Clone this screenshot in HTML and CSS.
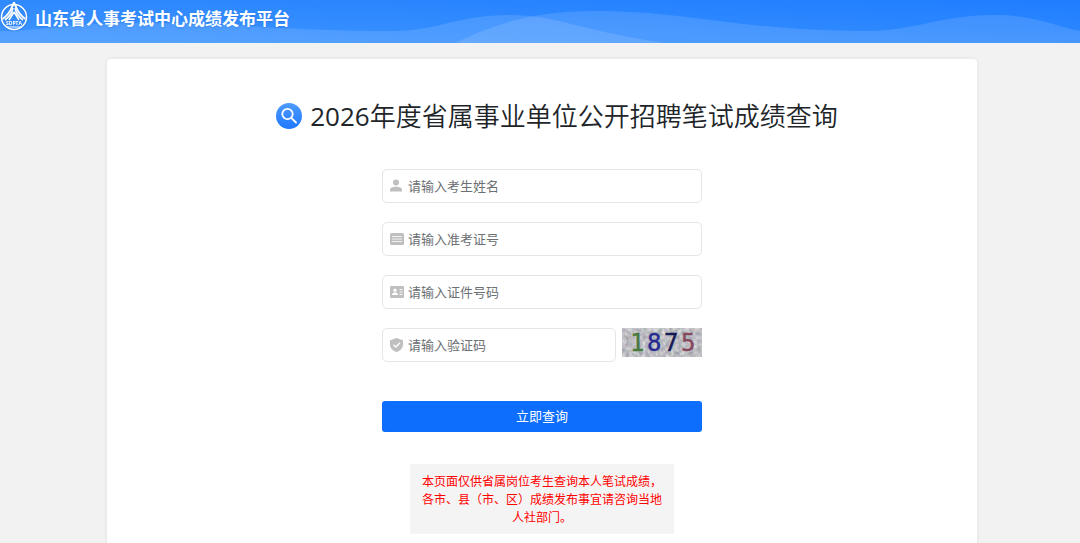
FILE: index.html
```html
<!DOCTYPE html>
<html lang="zh-CN">
  <head>
    <meta charset="UTF-8" />
    <meta name="viewport" content="width=device-width, initial-scale=1" />
    <title>山东省人事考试中心成绩发布平台</title>
    <link rel="stylesheet" href="styles.css">
  </head>
  <body>
    <header class="header">
      <svg class="header-waves" viewBox="0 0 1080 43" preserveAspectRatio="none" aria-hidden="true">
        <path d="M0 31C40 31 60 24 130 23C210 22 290 31 395 31C435 31 460 15 508 15C560 15 575 30 665 43H0Z" />
        <path d="M455 43C490 26 530 11 595 11C690 11 740 31 868 31C915 31 940 15 994 15C1035 15 1055 26 1080 31V43Z" />
      </svg>
      <svg class="logo" viewBox="0 0 28 32" aria-hidden="true">
        <circle cx="14" cy="17" r="12.500" fill="none" stroke="#fff" stroke-width="1.500" />
        <path d="M14 2.500L16 7C18 12 21 16 25.500 19M14 2.500L12 7C10 12 7 16 2.500 19" fill="none" stroke="#fff" stroke-width="2" />
        <path d="M13 8C12 13 9 17 5 20M15 8C16 13 19 17 23 20M14 12L9 20M14 12L19 20" fill="none" stroke="#fff" stroke-width="1.600" />
        <text class="logo-text" x="14" y="25" text-anchor="middle">SDPTA</text>
        <path d="M7 27H21" stroke="#fff" stroke-width="1" />
      </svg>
      <span class="header-title">山东省人事考试中心成绩发布平台</span>
    </header>

    <main class="page">
      <div class="card">
        <h1 class="page-title">
          <svg class="title-icon" viewBox="0 0 26 26" aria-hidden="true">
            <defs>
              <linearGradient id="titleFill" x1="0" y1="0" x2="0" y2="1">
                <stop offset="0" stop-color="#4e9bff" />
                <stop offset="1" stop-color="#1f78ff" />
              </linearGradient>
            </defs>
            <circle cx="13" cy="13" r="13" fill="url(#titleFill)" />
            <circle cx="11.500" cy="11" r="5.200" fill="none" stroke="#fff" stroke-width="1.800" />
            <path d="M15.300 14.800L20 19.500" stroke="#fff" stroke-width="1.800" stroke-linecap="round" />
          </svg>
          <span><span class="title-year">2026</span>年度省属事业单位公开招聘笔试成绩查询</span>
        </h1>

        <form class="query-form">
          <div class="field">
            <svg class="field-icon" viewBox="0 0 14 14" aria-hidden="true">
              <circle cx="6" cy="3.500" r="3" />
              <path d="M0 12.500V11C0 9 2.500 7.800 6 7.800S12 9 12 11V12.500Z" />
            </svg>
            <input type="text" class="field-input" placeholder="请输入考生姓名" aria-label="考生姓名" />
          </div>
          <div class="field">
            <svg class="field-icon" viewBox="0 0 14 14" aria-hidden="true">
              <rect x="0" y="1" width="14" height="12" rx="1.500" />
              <path d="M2 4.500H12M2 7H12M2 9.500H12" stroke="#fff" stroke-width="0.800" />
            </svg>
            <input type="text" class="field-input" placeholder="请输入准考证号" aria-label="准考证号" />
          </div>
          <div class="field">
            <svg class="field-icon" viewBox="0 0 14 14" aria-hidden="true">
              <rect x="0" y="1" width="14" height="12" rx="1" />
              <circle cx="5" cy="5.200" r="1.600" fill="#fff" />
              <path d="M2 10C2 8 3.500 7.500 5 7.500S8 8 8 10Z" fill="#fff" />
              <path d="M9.500 4.500H12.500M9.500 7H12.500M9.500 9.500H12.500" stroke="#fff" stroke-width="0.900" />
            </svg>
            <input type="text" class="field-input" placeholder="请输入证件号码" aria-label="证件号码" />
          </div>
          <div class="code-row">
            <div class="field">
              <svg class="field-icon" viewBox="0 0 14 14" aria-hidden="true">
                <path d="M6.500 0L13 2.300V6.500C13 10 10.500 12.500 6.500 14C2.500 12.500 0 10 0 6.500V2.300Z" />
                <path d="M3.500 6.800L5.800 9L10 4.800" fill="none" stroke="#fff" stroke-width="1.400" />
              </svg>
              <input type="text" class="field-input" placeholder="请输入验证码" aria-label="验证码" />
            </div>
            <svg class="captcha" viewBox="0 0 80 29" role="img" aria-label="验证码图片">
              <defs>
                <filter id="grain" x="0" y="0" width="100%" height="100%" color-interpolation-filters="sRGB">
                  <feTurbulence type="fractalNoise" baseFrequency="0.250" numOctaves="2" seed="7" />
                  <feColorMatrix values="0.350 0.200 0 0 0.470  0.250 0.300 0 0 0.470  0.250 0.200 0.100 0 0.490  0 0 0 0 1" />
                </filter>
              </defs>
              <rect width="80" height="29" filter="url(#grain)" />
              <text x="8" y="23" fill="#477a3d" stroke="#477a3d">1</text>
              <text x="25" y="23" fill="#252b8f" stroke="#252b8f">8</text>
              <text x="42" y="23" fill="#151a55" stroke="#151a55">7</text>
              <text x="59" y="23" fill="#86495f" stroke="#86495f">5</text>
            </svg>
          </div>
          <button type="submit" class="submit-button">立即查询</button>
        </form>

        <p class="notice">本页面仅供省属岗位考生查询本人笔试成绩，各市、县（市、区）成绩发布事宜请咨询当地人社部门。</p>
      </div>
    </main>
  </body>
</html>
```
FILE: styles.css
```css
* {
  box-sizing: border-box;
}

body {
  margin: 0;
  min-height: 100vh;
  background-color: #f2f2f2;
  color: #212529;
  font-family: "Open Sans", "Noto Sans CJK SC", sans-serif;
  font-size: 13px;
}

.header {
  position: relative;
  display: flex;
  align-items: flex-start;
  gap: 7px;
  height: 43px;
  background: linear-gradient(to top right, #3f96ff, #1f7dff);
  color: #fff;
}

.header-waves {
  position: absolute;
  inset: 0;
  width: 100%;
  height: 100%;
  fill: rgba(255, 255, 255, 0.12);
}

.logo {
  position: relative;
  width: 28px;
  height: 32px;
  filter: drop-shadow(0 1px 1px rgba(0, 50, 130, 0.2));
}

.logo-text {
  fill: #fff;
  font-size: 5px;
  font-weight: bold;
}

.header-title {
  position: relative;
  font-size: 17px;
  font-weight: bold;
  line-height: 38px;
  text-shadow: 0 1px 2px rgba(0, 50, 130, 0.15);
}

.page {
  padding: 16px 16px 0 20px;
}

.card {
  max-width: 870px;
  min-height: calc(100vh - 59px);
  margin: 0 auto;
  padding: 38px 16px 9px;
  background-color: #fff;
  border-radius: 4px 4px 0 0;
  box-shadow: 0 0 4px rgba(0, 0, 0, 0.08);
}

.page-title {
  display: flex;
  align-items: center;
  justify-content: center;
  gap: 8px;
  margin: 0 0 34px;
  padding-left: 30px;
  font-size: 26px;
  font-weight: 350;
  line-height: 38px;
}

.title-year {
  font-weight: 400;
}

.title-icon {
  flex: none;
  width: 26px;
  height: 26px;
}

.query-form {
  display: flex;
  flex-direction: column;
  gap: 19px;
  width: 320px;
  max-width: 100%;
  margin: 0 auto;
}

.field {
  display: flex;
  align-items: center;
  flex: 1;
  gap: 4px;
  height: 34px;
  padding: 0 7px;
  border: 1px solid #e3e5e8;
  border-radius: 5px;
}

.field-icon {
  flex: none;
  width: 14px;
  height: 14px;
  fill: #bfbfbf;
}

.field-input {
  flex: 1;
  min-width: 0;
  height: 32px;
  padding: 0;
  border: 0;
  outline: 0;
  background: none;
  color: #212529;
  font: inherit;
}

.field-input::placeholder {
  color: #6c6f73;
}

.code-row {
  display: flex;
  align-items: flex-start;
  gap: 6px;
}

.captcha {
  width: 80px;
  height: 29px;
  font-family: "DejaVu Sans Mono", monospace;
  font-size: 24px;
  stroke-width: 0.4;
}

.submit-button {
  height: 31px;
  margin-top: 20px;
  padding: 0 0 2px;
  border: 0;
  border-radius: 3px;
  background-color: #0d6efd;
  color: #fff;
  font: inherit;
  cursor: pointer;
}

.notice {
  width: 264px;
  max-width: 100%;
  margin: 32px auto 0;
  padding: 9px 10px 7px;
  background-color: #f4f4f4;
  color: #f00;
  font-size: 12px;
  line-height: 18px;
  text-align: center;
}
```
